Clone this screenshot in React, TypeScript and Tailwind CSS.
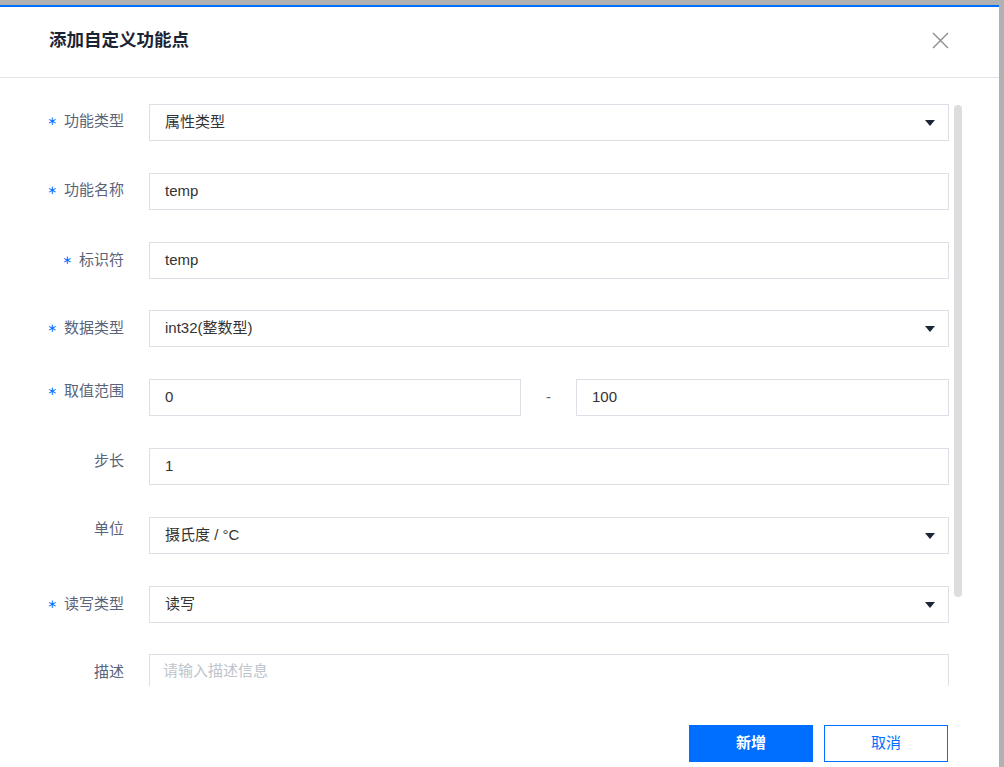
const font = { fontFamily: '"Liberation Sans", "Noto Sans CJK SC", sans-serif' };

function Arrow() {
  return (
    <svg width="10" height="6" viewBox="0 0 10 6" className="shrink-0">
      <path d="M0 0 L10 0 L5 6 Z" fill="#1c2538" />
    </svg>
  );
}

function Label({ text, required, pad }: { text: string; required?: boolean; pad: string }) {
  return (
    <div className={`w-[100px] mr-[25px] shrink-0 flex justify-end items-center self-start text-[15px] leading-[20px] text-[#59637a] ${pad}`}>
      {required && (
        <span className="text-[#006eff] text-[12px] leading-[20px] mr-[7px]" style={{ fontFamily: '"DejaVu Sans", sans-serif' }}>
          ∗
        </span>
      )}
      <span>{text}</span>
    </div>
  );
}

function Field({ value, select, placeholder, className }: { value?: string; select?: boolean; placeholder?: string; className?: string }) {
  return (
    <div className={`${className ?? "flex-1"} h-[37px] border border-[#dcdfe6] bg-white flex items-center pl-[15px] pr-[13px] text-[15px] text-[#333]`}>
      <span className={placeholder ? "flex-1 text-[#c0c4cc]" : "flex-1"}>{value ?? placeholder}</span>
      {select && <Arrow />}
    </div>
  );
}

export default function App() {
  return (
    <div className="w-[1004px] h-[767px] bg-[#b1b1b1] pt-[5px] overflow-hidden" style={font}>
      <div className="w-[999px] h-[762px] bg-white border-t-2 border-[#006eff] flex flex-col">
        {/* header */}
        <div className="h-[71px] shrink-0 border-b border-[#e2e4ea] flex items-center justify-between pl-[49px] pr-[50px] pb-[3px]">
          <h2 className="text-[17.5px] font-bold text-[#1b2435]">添加自定义功能点</h2>
          <svg width="17" height="17" viewBox="0 0 17 17">
            <path d="M1 1 L16 16 M16 1 L1 16" stroke="#8c8c8c" strokeWidth="1.4" fill="none" />
          </svg>
        </div>

        {/* body */}
        <div className="h-[608px] shrink-0 overflow-hidden flex pl-[24px]">
          <div className="w-[925px] pt-[26px]">
            <div className="flex mb-[32px]">
              <Label text="功能类型" required pad="pt-[7px]" />
              <Field value="属性类型" select />
            </div>
            <div className="flex mb-[32px]">
              <Label text="功能名称" required pad="pt-[7px]" />
              <Field value="temp" />
            </div>
            <div className="flex mb-[31px]">
              <Label text="标识符" required pad="pt-[8px]" />
              <Field value="temp" />
            </div>
            <div className="flex mb-[32px]">
              <Label text="数据类型" required pad="pt-[8px]" />
              <Field value="int32(整数型)" select />
            </div>

            <div className="flex mb-[32px]">
              <Label text="取值范围" required pad="pt-[2px]" />
              <div className="flex-1 flex items-center">
                <Field value="0" className="w-[372px] shrink-0" />
                <span className="w-[55px] text-center text-[15px] text-[#59637a]">-</span>
                <Field value="100" />
              </div>
            </div>

            <div className="flex mb-[32px]">
              <Label text="步长" pad="pt-[3px]" />
              <Field value="1" />
            </div>

            <div className="flex mb-[32px]">
              <Label text="单位" pad="pt-[2px]" />
              <Field value="摄氏度 / °C" select />
            </div>

            <div className="flex mb-[31px]">
              <Label text="读写类型" required pad="pt-[8px]" />
              <Field value="读写" select />
            </div>

            <div className="flex">
              <Label text="描述" pad="pt-[8px]" />
              <div className="flex-1 h-[80px] border border-[#dcdfe6] pl-[13px] pt-[5px] text-[15px] text-[#c0c4cc]">
                请输入描述信息
              </div>
            </div>
          </div>
          <div className="ml-[5px] mt-[27px] w-[8px] h-[492px] rounded-full bg-[#dddddd]" />
        </div>

        {/* footer */}
        <div className="flex-1 flex justify-end items-start pt-[39px] pr-[51px] gap-[11px]">
          <button className="w-[124px] h-[37px] bg-[#006eff] text-white text-[15px] font-bold">新增</button>
          <button className="w-[124px] h-[37px] border border-[#006eff] text-[#006eff] text-[15px] bg-white">取消</button>
        </div>
      </div>
    </div>
  );
}
